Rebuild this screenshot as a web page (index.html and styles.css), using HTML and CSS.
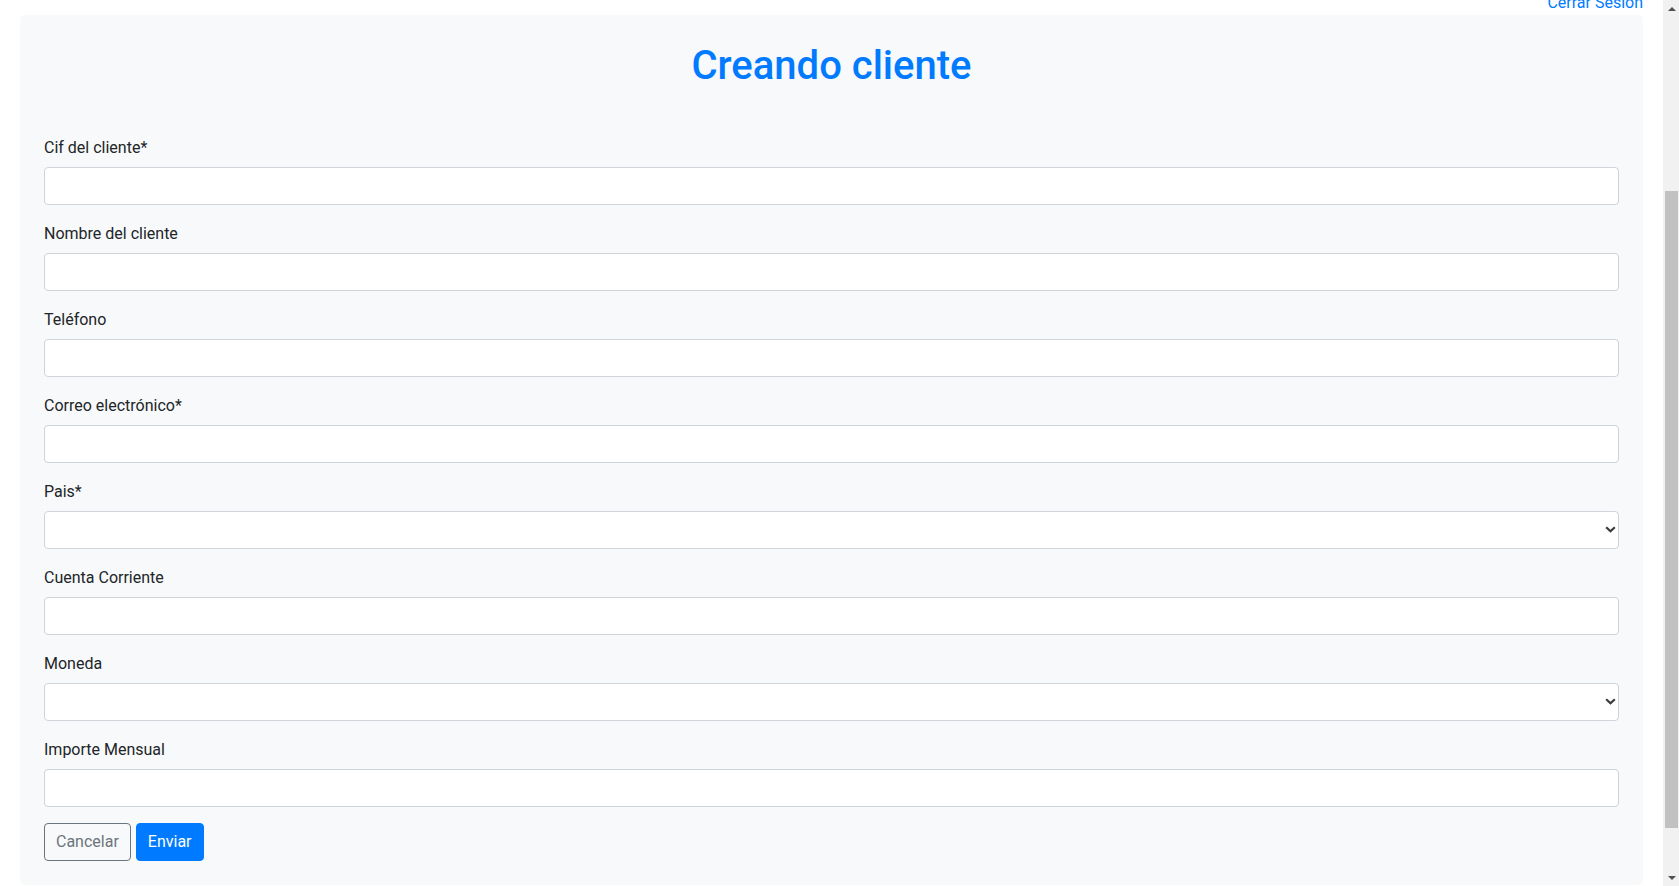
FILE: index.html
```html
<!DOCTYPE html>
<html lang="es">
<head>
<meta charset="utf-8">
<title>Creando cliente</title>
<link rel="stylesheet" href="styles.css">
</head>
<body>
<div class="viewport" id="viewport">
  <header class="topbar">
    <div class="brand-space"></div>
    <nav class="session">
      <a href="#" class="logout">Cerrar Sesion</a>
    </nav>
  </header>
  <main class="page">
    <section class="card">
      <h1 class="title">Creando cliente</h1>
      <form class="client-form">
        <div class="form-group">
          <label class="label" for="cif">Cif del cliente*</label>
          <input class="field" id="cif" type="text">
        </div>
        <div class="form-group">
          <label class="label" for="nombre">Nombre del cliente</label>
          <input class="field" id="nombre" type="text">
        </div>
        <div class="form-group">
          <label class="label" for="telefono">Teléfono</label>
          <input class="field" id="telefono" type="text">
        </div>
        <div class="form-group">
          <label class="label" for="correo">Correo electrónico*</label>
          <input class="field" id="correo" type="text">
        </div>
        <div class="form-group">
          <label class="label" for="pais">Pais*</label>
          <div class="select-wrap">
            <select class="field field-select" id="pais"><option></option></select>
            <svg class="chevron" width="11" height="7" viewBox="0 0 11 7"><path d="M1.2 1.2 L5.5 5.3 L9.8 1.2" fill="none" stroke="#3b3b3b" stroke-width="2.2"/></svg>
          </div>
        </div>
        <div class="form-group">
          <label class="label" for="cuenta">Cuenta Corriente</label>
          <input class="field" id="cuenta" type="text">
        </div>
        <div class="form-group">
          <label class="label" for="moneda">Moneda</label>
          <div class="select-wrap">
            <select class="field field-select" id="moneda"><option></option></select>
            <svg class="chevron" width="11" height="7" viewBox="0 0 11 7"><path d="M1.2 1.2 L5.5 5.3 L9.8 1.2" fill="none" stroke="#3b3b3b" stroke-width="2.2"/></svg>
          </div>
        </div>
        <div class="form-group">
          <label class="label" for="importe">Importe Mensual</label>
          <input class="field" id="importe" type="text">
        </div>
        <div class="actions">
          <button type="button" class="btn btn-outline">Cancelar</button>
          <button type="submit" class="btn btn-primary">Enviar</button>
        </div>
      </form>
    </section>
  </main>
</div>
<div class="scrollbar" aria-hidden="true">
  <div class="sb-btn"><span class="arrow-up"></span></div>
  <div class="sb-track"><div class="sb-thumb"></div></div>
  <div class="sb-btn"><span class="arrow-down"></span></div>
</div>
<script src="app.js"></script>
</body>
</html>
```

FILE: styles.css
```css
html, body {
  height: 100%;
}
body {
  margin: 0;
  display: flex;
  overflow: hidden;
  font-family: Roboto, "Liberation Sans", sans-serif;
  font-size: 16px;
  line-height: 1.5;
  color: #212529;
  background: #ffffff;
}
.viewport {
  flex: 1;
  min-width: 0;
  overflow: hidden;
}
.topbar {
  display: flex;
  flex-direction: column;
  padding: 0 20px;
}
.brand-space {
  height: 230px;
}
.session {
  display: flex;
  justify-content: flex-end;
}
.logout {
  color: #007bff;
  text-decoration: none;
  line-height: 24px;
  padding-top: 1px;
}
.page {
  padding: 0 20px 58px;
}
.card {
  background: #f8f9fa;
  border-radius: 5px;
  padding: 24px;
}
.title {
  margin: 0 0 45px;
  padding-top: 3px;
  text-align: center;
  color: #007bff;
  font-size: 40px;
  font-weight: 500;
  line-height: 48px;
}
.client-form {
  display: flex;
  flex-direction: column;
}
.form-group {
  display: flex;
  flex-direction: column;
  margin-bottom: 16px;
}
.label {
  display: block;
  margin-bottom: 7px;
  padding-top: 1px;
  line-height: 24px;
}
.field {
  display: block;
  box-sizing: border-box;
  width: 100%;
  height: 38px;
  padding: 6px 12px;
  font-family: inherit;
  font-size: 16px;
  line-height: 24px;
  color: #495057;
  background: #ffffff;
  border: 1px solid #ced4da;
  border-radius: 4px;
  margin: 0;
}
.field-select {
  -webkit-appearance: none;
  appearance: none;
}
.select-wrap {
  position: relative;
}
.chevron {
  position: absolute;
  right: 3px;
  top: 15px;
  pointer-events: none;
}
.actions {
  display: flex;
  gap: 5px;
}
.btn {
  box-sizing: border-box;
  height: 38px;
  padding: 6px 11px;
  font-family: inherit;
  font-size: 16px;
  line-height: 24px;
  border-radius: 4px;
  border: 1px solid transparent;
  cursor: pointer;
}
.btn-outline {
  color: #6c757d;
  background: transparent;
  border-color: #6c757d;
}
.btn-primary {
  color: #ffffff;
  background: #007bff;
  border-color: #007bff;
}

/* scrollbar */
.scrollbar {
  flex: none;
  width: 16px;
  background: #f1f1f1;
  display: flex;
  flex-direction: column;
}
.sb-btn {
  height: 17px;
  display: flex;
  align-items: center;
  justify-content: center;
  padding-left: 1px;
}
.arrow-up {
  width: 0;
  height: 0;
  border-left: 4px solid transparent;
  border-right: 4px solid transparent;
  border-bottom: 4px solid #505050;
}
.arrow-down {
  width: 0;
  height: 0;
  border-left: 4px solid transparent;
  border-right: 4px solid transparent;
  border-top: 4px solid #505050;
}
.sb-track {
  flex: 1;
  padding-top: 174px;
}
.sb-thumb {
  height: 637px;
  margin: 0 1px 0 2px;
  background: #c1c1c1;
}
```

FILE: app.js
```js
document.getElementById('viewport').scrollTop = 240;
```
